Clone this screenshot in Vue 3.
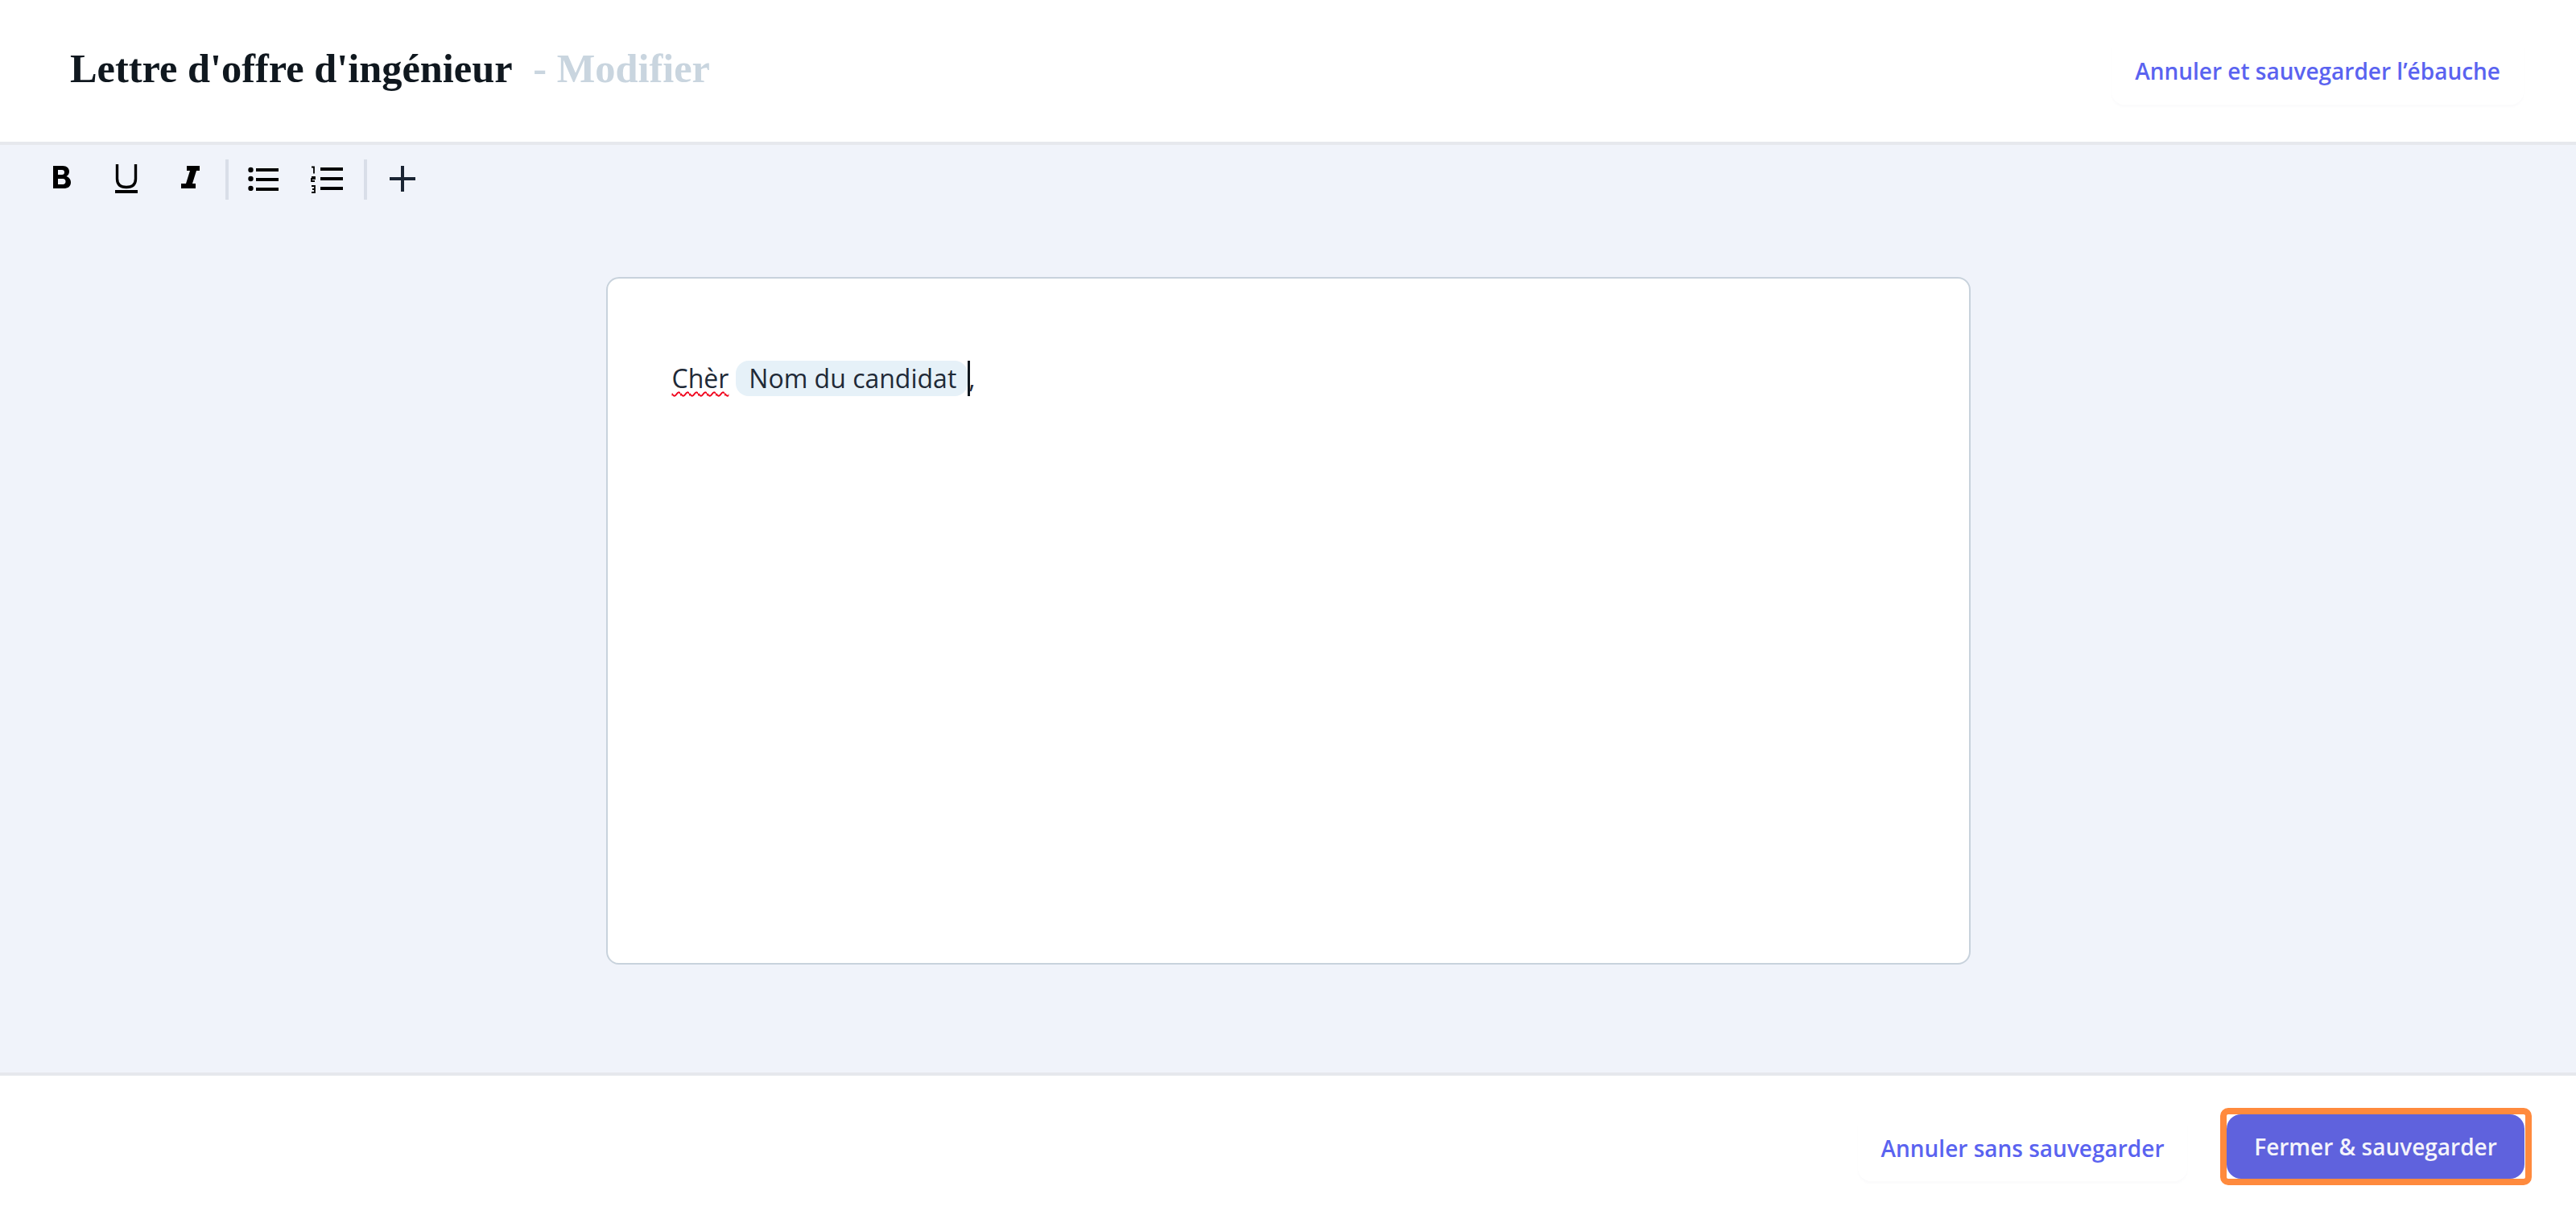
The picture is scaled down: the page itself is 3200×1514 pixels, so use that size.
<script setup>
const numbered = [
  'M1 1.5h3v8',
  'M1 14h4v2H1v3h4',
  'M1 25h4v8H1M2 29h3'
]
</script>

<template>
  <div class="page">
    <header class="top">
      <h1 class="title">Lettre d'offre d'ingénieur <span class="mode">- Modifier</span></h1>
      <button class="ghost">Annuler et sauvegarder l’ébauche</button>
    </header>

    <main class="main">
      <div class="toolbar">
        <button class="tool b" aria-label="Gras">
          <svg width="24" height="30" viewBox="0 0 24 30"><path fill="#000" fill-rule="evenodd" d="M1 1h12c5 0 8 3 8 7 0 3-1.500 5-3.500 6 3 1 5.500 3.500 5.500 7.500 0 5-3.500 7.500-9 7.500H1zM7 6v6h5c2 0 3-1.200 3-3s-1-3-3-3zM7 17v7h6c2.300 0 3.500-1.300 3.500-3.500S15.300 17 13 17z"/></svg>
        </button>
        <button class="tool u" aria-label="Souligné">
          <svg width="30" height="38" viewBox="0 0 30 38"><path fill="none" stroke="#000" stroke-width="3.400" d="M3.500 1v18c0 7 4 10.500 11.500 10.500S26.500 26 26.500 19V1"/><path stroke="#000" stroke-width="4" d="M1 35h28"/></svg>
        </button>
        <button class="tool i" aria-label="Italique">
          <svg width="26" height="28" viewBox="0 0 26 28"><path fill="#000" d="M8 0h16v6h-4l-5 16h4v6H1v-6h6l5-16H8z"/></svg>
        </button>
        <span class="sep first"></span>
        <button class="tool ul" aria-label="Liste à puces">
          <svg width="38" height="30" viewBox="0 0 38 30"><g fill="#000"><circle cx="3.500" cy="4" r="3.200"/><circle cx="3.500" cy="15" r="3.200"/><circle cx="3.500" cy="27" r="3.200"/><rect x="10" y="2" width="28" height="4"/><rect x="10" y="14" width="28" height="4"/><rect x="10" y="26" width="28" height="4"/></g></svg>
        </button>
        <button class="tool ol" aria-label="Liste numérotée">
          <svg width="40" height="34" viewBox="0 0 40 34"><path v-for="d in numbered" :key="d" :d="d" fill="none" stroke="#000" stroke-width="1.800"/><g fill="#000"><rect x="12" y="2" width="28" height="4"/><rect x="12" y="14" width="28" height="4"/><rect x="12" y="26" width="28" height="4"/></g></svg>
        </button>
        <span class="sep second"></span>
        <button class="tool plus" aria-label="Ajouter">
          <svg width="32" height="32" viewBox="0 0 32 32"><path stroke="#1a2433" stroke-width="4" d="M16 0v32M0 16h32"/></svg>
        </button>
      </div>

      <section class="card">
        <p class="line"><span class="typo">Chèr</span><span class="chip">Nom du candidat</span><span class="caret"></span>,</p>
      </section>
    </main>

    <footer class="bottom">
      <button class="ghost cancel">Annuler sans sauvegarder</button>
      <div class="focus">
        <button class="primary">Fermer &amp; sauvegarder</button>
      </div>
    </footer>
  </div>
</template>

<style scoped>
.page {
  display: flex;
  flex-direction: column;
  height: 1514px;
  font-family: "Open Sans", sans-serif;
  color: #1f2a37;
  background: #fff;
  overflow: hidden;
}
button {
  font: inherit;
  border: 0;
  background: none;
  padding: 0;
}
.top {
  flex: 0 0 180px;
  box-sizing: border-box;
  display: flex;
  align-items: flex-start;
  justify-content: space-between;
  border-bottom: 4px solid #e6e8ed;
  padding: 46px 65px 0 87px;
}
.title {
  margin: 9px 0 0;
  font: 700 50.4px/60px "Liberation Serif", serif;
  color: #10181f;
}
.mode {
  color: #c9d5df;
  margin-left: 14px;
}
.ghost {
  height: 84px;
  padding: 0 29px;
  border-radius: 16px;
  background: #fff;
  color: #5a63f0;
  font-size: 28px;
  font-weight: 600;
  white-space: nowrap;
  box-shadow: 0 3px 3px rgba(30, 40, 80, 0.02);
}
.main {
  flex: 1;
  min-height: 0;
  background: #f0f3fa;
  display: flex;
  flex-direction: column;
  align-items: center;
}
.toolbar {
  align-self: stretch;
  height: 68px;
  display: flex;
  align-items: flex-start;
  padding: 18px 0 0 65px;
  box-sizing: border-box;
}
.tool {
  display: flex;
  line-height: 0;
}
.tool.b { margin-top: 7px; }
.tool.u { margin: 5px 0 0 53px; }
.tool.i { margin: 8px 0 0 52px; }
.sep {
  width: 4px;
  height: 50px;
  background: #d9dee8;
}
.sep.first { margin-left: 30px; }
.tool.ul { margin: 9px 0 0 24px; }
.tool.ol { margin: 8px 0 0 40px; }
.sep.second { margin-left: 26px; }
.tool.plus { margin: 8px 0 0 28px; }
.card {
  box-sizing: border-box;
  width: 1695px;
  height: 854px;
  margin-top: 96px;
  background: #fff;
  border: 2px solid #c8d2dc;
  border-radius: 16px;
  padding: 102px 80px 0;
}
.line {
  margin: 0;
  display: flex;
  align-items: center;
  height: 44px;
  font-size: 32px;
  line-height: 44px;
  color: #1f2a37;
}
.typo {
  text-decoration: underline wavy #f0001a 2px;
  text-underline-offset: 4px;
  text-decoration-skip-ink: none;
}
.chip {
  margin-left: 9px;
  padding: 0 14px 0 16px;
  background: #e6f1f8;
  border-radius: 16px;
}
.caret {
  width: 3px;
  height: 44px;
  margin-right: -2px;
  background: #10181f;
}
.bottom {
  flex: 0 0 182px;
  box-sizing: border-box;
  border-top: 4px solid #e6e8ed;
  display: flex;
  align-items: flex-start;
  justify-content: flex-end;
  padding: 40px 55px 0 0;
}
.cancel {
  margin: 8px 41px 0 0;
  height: 83px;
  width: 409px;
  padding: 0;
}
.focus {
  border: 8px solid #ff8a3d;
  border-radius: 10px;
  background: #fff;
  display: flex;
  padding: 0 1px 0 0;
}
.primary {
  width: 370px;
  height: 80px;
  border-radius: 18px;
  background: #5f62dd;
  color: #f4f4fb;
  font-size: 28px;
  font-weight: 600;
}
</style>
